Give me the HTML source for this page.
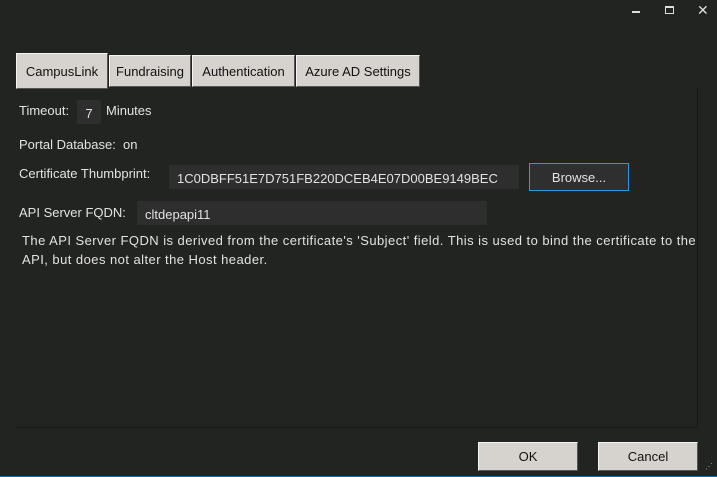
<!DOCTYPE html>
<html><head><style>
body{margin:0;width:717px;height:477px;background:#222421;position:relative;overflow:hidden;font-family:"Liberation Sans",sans-serif;font-size:13px;color:#e2e2e2}
div{position:absolute;box-sizing:border-box}
.t{white-space:nowrap}
.tab{background:#d6d3ce;color:#111;border:1px solid #f4f4f4;border-right-color:#555;border-bottom-color:#555;text-align:center;font-size:13px}
.box{background:#2e2e2e}
.btn{background:#d6d3ce;color:#111;border:1px solid #f4f4f4;border-right-color:#555;border-bottom-color:#555;text-align:center;line-height:27px;font-size:13px}
</style></head><body>
<div style="left:632px;top:11px;width:8px;height:2px;background:#ddd"></div>
<div style="left:665px;top:6px;width:9px;height:8px;border:1px solid #ddd;border-top-width:2px"></div>
<div class="t" style="left:697px;top:2px;font-size:14px;color:#ddd">✕</div>
<div style="left:16px;top:88px;width:682px;height:340px;border-right:1px solid #161816;border-bottom:1px solid #161816"></div>
<div class="tab" style="left:16px;top:53px;width:92px;height:36px;line-height:36px">CampusLink</div>
<div class="tab" style="left:109px;top:55px;width:82px;height:32px;line-height:32px">Fundraising</div>
<div class="tab" style="left:192px;top:55px;width:103px;height:32px;line-height:32px">Authentication</div>
<div class="tab" style="left:296px;top:55px;width:124px;height:32px;line-height:32px">Azure AD Settings</div>
<div class="t" style="left:19px;top:103px">Timeout:</div>
<div class="box" style="left:77px;top:100px;width:24px;height:24px;text-align:center;line-height:28px">7</div>
<div class="t" style="left:106px;top:103px">Minutes</div>
<div class="t" style="left:19px;top:137px">Portal Database:&nbsp; on</div>
<div class="t" style="left:19px;top:166px">Certificate Thumbprint:</div>
<div class="box" style="left:169px;top:165px;width:350px;height:24px;line-height:27px;padding-left:8px">1C0DBFF51E7D751FB220DCEB4E07D00BE9149BEC</div>
<div style="left:529px;top:163px;width:100px;height:28px;border:1px solid #1e9ee8;background:#2f2f2f;text-align:center;line-height:27px">Browse...</div>
<div class="t" style="left:19px;top:205px">API Server FQDN:</div>
<div class="box" style="left:137px;top:201px;width:350px;height:24px;line-height:27px;padding-left:8px">cltdepapi11</div>
<div style="left:22px;top:231px;width:692px;line-height:19px;letter-spacing:0.45px">The API Server FQDN is derived from the certificate's 'Subject' field. This is used to bind the certificate to the API, but does not alter the Host header.</div>
<div class="btn" style="left:478px;top:442px;width:100px;height:29px">OK</div>
<div class="btn" style="left:598px;top:442px;width:100px;height:29px">Cancel</div>
<div class="t" style="left:705px;top:462px;font-size:8px;color:#aaa;letter-spacing:-1px">⋰</div>
<div style="left:0;top:476px;width:717px;height:1px;background:#1f6e9a"></div>
</body></html>
